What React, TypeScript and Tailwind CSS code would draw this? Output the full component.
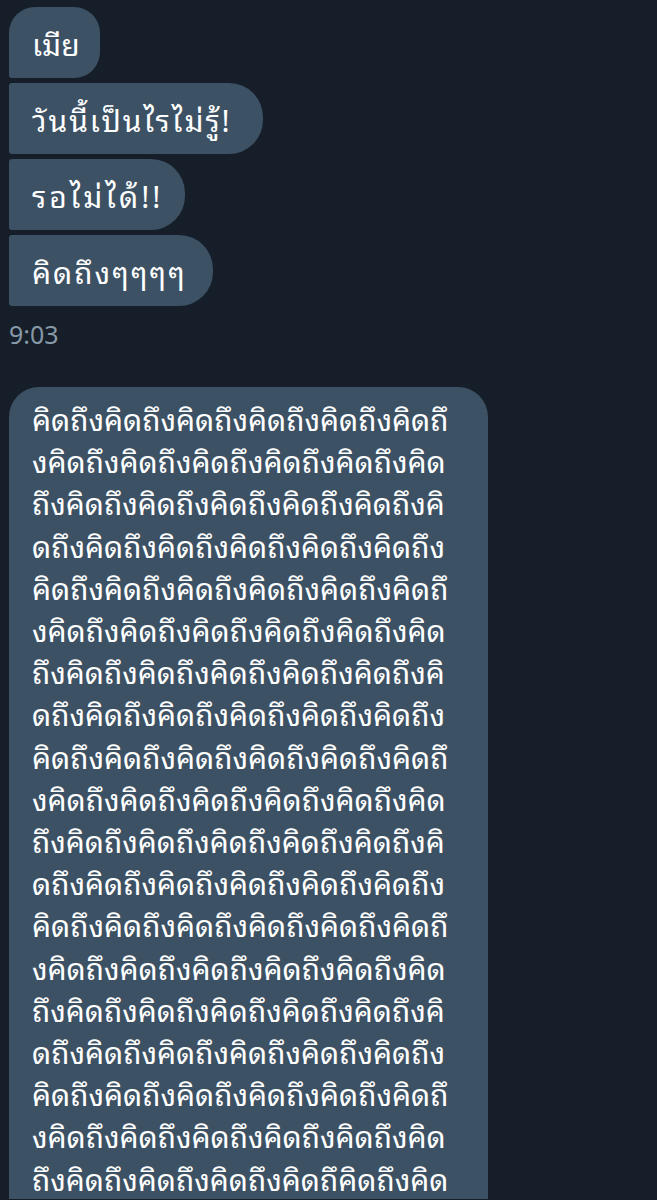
const CHUNK = "คิดถึง"

const bigLines = (() => {
  const block = [
    CHUNK.repeat(5) + "คิดถึ",
    "ง" + CHUNK.repeat(5) + "คิด",
    "ถึง" + CHUNK.repeat(5) + "คิ",
    "ด" + "ถึง" + CHUNK.repeat(5),
  ]
  const lines: string[] = []
  for (let i = 0; i < 18; i++) lines.push(block[i % 4])
  lines.push("ถึงคิดถึงคิดถึงคิดถึงคิดถึคิดถึงคิด")
  return lines
})()

const small = [
  { text: "เมีย", cls: "w-[91px] rounded-tl-[26px] rounded-tr-[26px] rounded-br-[26px] rounded-bl-[3px]" },
  { text: "วันนี้เป็นไรไม่รู้!", cls: "w-[254px] tracking-[2px] rounded-tl-[3px] rounded-tr-[34px] rounded-br-[34px] rounded-bl-[3px]" },
  { text: "รอไม่ได้!!", cls: "w-[176px] tracking-[3px] rounded-tl-[3px] rounded-tr-[34px] rounded-br-[34px] rounded-bl-[3px]" },
  { text: "คิดถึงๆๆๆๆ", cls: "w-[204px] tracking-[2px] rounded-tl-[3px] rounded-tr-[34px] rounded-br-[34px] rounded-bl-[3px]" },
]

export default function App() {
  return (
    <div
      className="h-[1200px] w-[657px] overflow-hidden bg-[#161f29] pl-[9px] pt-[7px] text-white"
      style={{ fontFamily: '"Noto Sans Thai Looped", "Noto Sans Thai", "Noto Sans", "DejaVu Sans", sans-serif' }}
    >
      {/* message group */}
      <div className="flex flex-col items-start gap-[5px]">
        {small.map((m) => (
          <div
            key={m.text}
            className={`flex h-[71px] items-center bg-[#3c5164] pl-[23px] text-[30px] whitespace-nowrap ${m.cls}`}
          >
            {m.text}
          </div>
        ))}
      </div>

      <div className="mt-[15px] text-[25px] leading-none text-[#8798a7]">9:03</div>

      {/* long message */}
      <div className="mt-[41px] w-[479px] rounded-t-[30px] bg-[#3c5164] pl-[23px] pt-[10px] text-[30px] leading-[42.2px]">
        {bigLines.map((l, i) => (
          <div key={i} className="whitespace-nowrap">
            {l}
          </div>
        ))}
      </div>
    </div>
  )
}
